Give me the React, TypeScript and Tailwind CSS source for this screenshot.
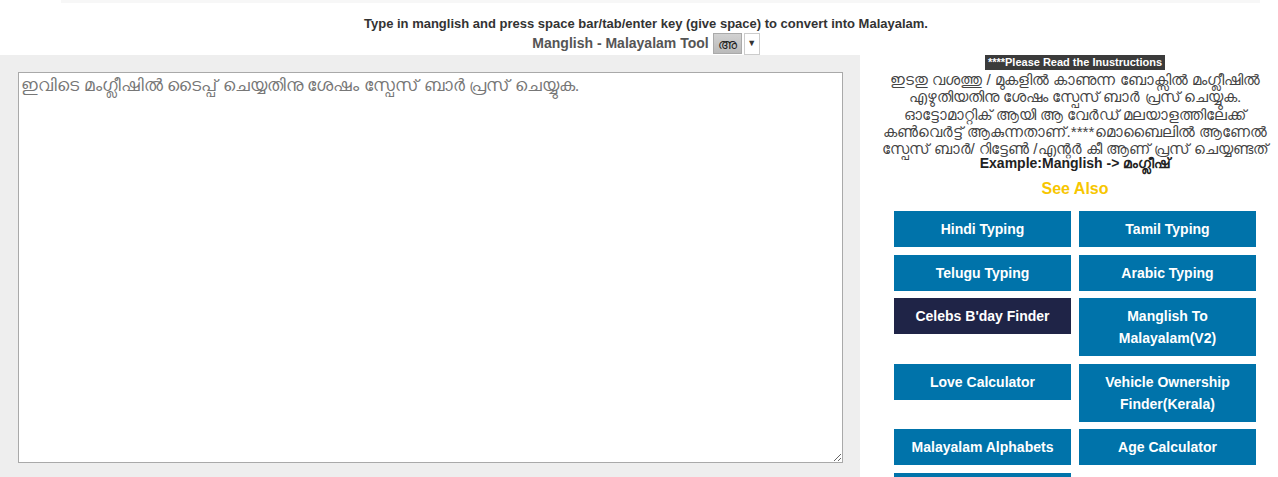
import React from 'react';

const links = [
  { label: 'Hindi Typing' },
  { label: 'Tamil Typing' },
  { label: 'Telugu Typing' },
  { label: 'Arabic Typing' },
  { label: "Celebs B'day Finder", dark: true },
  { label: 'Manglish To Malayalam(V2)' },
  { label: 'Love Calculator' },
  { label: 'Vehicle Ownership Finder(Kerala)' },
  { label: 'Malayalam Alphabets' },
  { label: 'Age Calculator' },
  { label: 'Kerala Lottery Results' },
];

const instructions = [
  'ഇടതു വശത്തു / മുകളിൽ കാണുന്ന ബോക്സിൽ മംഗ്ലീഷിൽ',
  'എഴുതിയതിനു ശേഷം സ്പേസ് ബാർ പ്രസ് ചെയ്യുക.',
  'ഓട്ടോമാറ്റിക് ആയി ആ വേർഡ് മലയാളത്തിലേക്ക്',
  'കൺവെർട്ട് ആകുന്നതാണ്.****മൊബൈലിൽ ആണേൽ',
  'സ്പേസ് ബാർ/ റിട്ടേൺ /എന്റർ കീ ആണ് പ്രസ് ചെയ്യണ്ടത്',
];

export default function App() {
  return (
    <div className="min-h-screen bg-white font-['Liberation_Sans',Arial,sans-serif] overflow-hidden">
      {/* top strip */}
      <div className="ml-[61px] mr-[18px] h-[3px] bg-[#f7f7f7]" />

      {/* heading */}
      <div className="pt-[13px] pl-[14px] text-center">
        <p className="text-[13px] leading-[16px] font-bold text-[#333]">
          Type in manglish and press space bar/tab/enter key (give space) to convert into Malayalam.
        </p>
        <div className="flex items-start justify-center gap-[2px] h-[22px]">
          <span className="text-[14px] leading-[20px] mt-[1px] font-bold text-[#555] mr-[2px]">Manglish - Malayalam Tool</span>
          <button className="h-[21px] w-[29px] mt-[1px] border border-[#aaa] bg-gradient-to-b from-[#d2d2d2] to-[#bababa] text-[14px] leading-none text-[#222]">
            അ
          </button>
          <button className="h-[22px] w-[16px] mt-[1px] border border-[#ccc] bg-white text-[9px] text-[#333]">
            ▼
          </button>
        </div>
      </div>

      <div className="flex mt-[1px]">
        {/* left: textarea panel */}
        <div className="w-[860px] shrink-0 bg-[#eee] pl-[18px] pr-[17px] pt-[17px] pb-[14px]">
          <textarea
            className="block w-full h-[391px] border border-[#a9a9a9] bg-white px-[2px] py-0 text-[16.5px] text-[#333] placeholder:text-[#777] outline-none"
            placeholder="ഇവിടെ മംഗ്ലീഷിൽ ടൈപ്പ് ചെയ്യതിനു ശേഷം സ്പേസ് ബാർ പ്രസ് ചെയ്യുക."
          />
        </div>

        {/* right: instructions */}
        <div className="flex-1 pl-[12px] flex flex-col items-center">
          <span className="bg-[#3b3b3b] text-white text-[11px] font-bold px-[3px] leading-[15px]">
            ****Please Read the Inustructions
          </span>
          <div className="mt-[1px] flex flex-col items-center text-[15.3px] text-[#444]">
            {instructions.map((line) => (
              <span key={line} className="block whitespace-nowrap h-[17.3px] leading-[17.3px]">
                {line}
              </span>
            ))}
          </div>
          <p className="mt-[-2px] text-[14px] leading-[17px] font-bold text-[#222]">
            Example:Manglish -&gt; മംഗ്ലീഷ്
          </p>
          <p className="mt-[7px] text-[16px] leading-[20px] font-bold text-[#f7c600]">See Also</p>

          <div className="mt-[12px] grid grid-cols-2 w-[362px] gap-x-[8px] gap-y-[7.5px] items-start">
            {links.map((l) => (
              <a
                key={l.label}
                href="#"
                className={
                  'block px-[12px] py-[7px] text-center text-[14px] leading-[22px] font-bold text-white ' +
                  (l.dark ? 'bg-[#1f2447]' : 'bg-[#0073aa]')
                }
              >
                {l.label}
              </a>
            ))}
          </div>
        </div>
      </div>
    </div>
  );
}
